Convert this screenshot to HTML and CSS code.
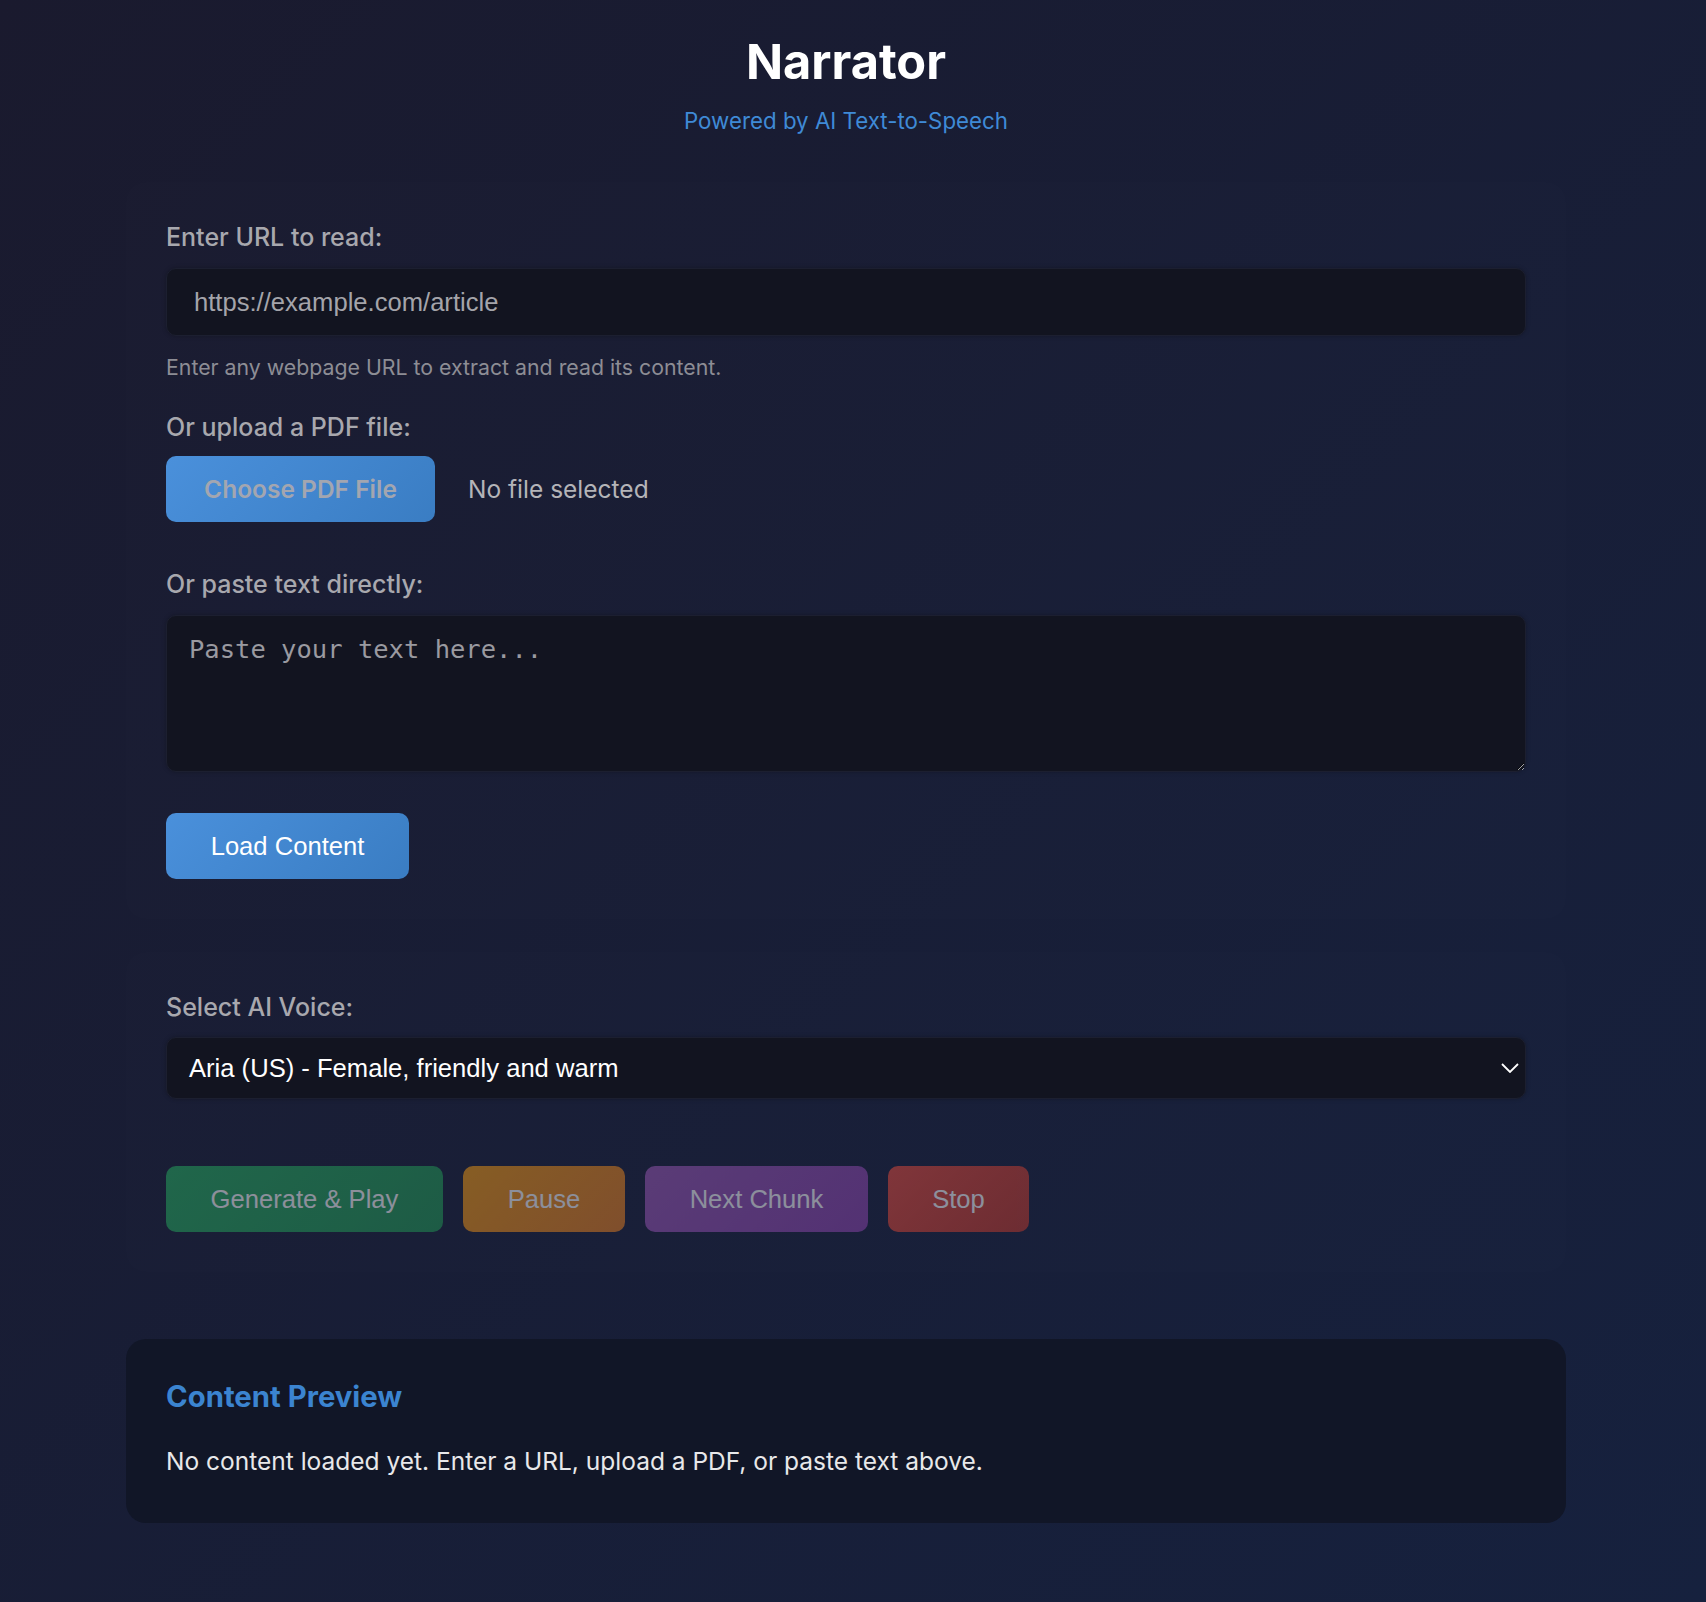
FILE: index.html
```html
<!DOCTYPE html>
<html lang="en">
<head>
<meta charset="utf-8">
<title>Narrator</title>
<link rel="stylesheet" href="styles.css">
</head>
<body>
<div class="page">
  <header class="header">
    <h1 class="title">Narrator</h1>
    <p class="subtitle">Powered by AI Text-to-Speech</p>
  </header>

  <section class="panel panel-input">
    <label class="label label-url" for="url">Enter URL to read:</label>
    <input id="url" class="field field-url" type="text" placeholder="https://example.com/article">
    <p class="helper">Enter any webpage URL to extract and read its content.</p>

    <label class="label label-pdf">Or upload a PDF file:</label>
    <div class="file-row">
      <span class="file-btn">Choose PDF File</span>
      <span class="file-name">No file selected</span>
    </div>

    <label class="label label-text" for="text">Or paste text directly:</label>
    <textarea id="text" class="field field-text" placeholder="Paste your text here..."></textarea>

    <button class="btn btn-load" type="button">Load Content</button>
  </section>

  <section class="panel panel-voice">
    <label class="label label-voice" for="voice">Select AI Voice:</label>
    <div class="select">
      <span class="select-value">Aria (US) - Female, friendly and warm</span>
      <svg class="chevron" width="18" height="10" viewBox="0 0 18 10"><polyline points="1,1 9,9 17,1" fill="none" stroke="#ffffff" stroke-width="1.8"/></svg>
    </div>
    <div class="controls">
      <button class="btn btn-ctrl btn-play" type="button">Generate &amp; Play</button>
      <button class="btn btn-ctrl btn-pause" type="button">Pause</button>
      <button class="btn btn-ctrl btn-next" type="button">Next Chunk</button>
      <button class="btn btn-ctrl btn-stop" type="button">Stop</button>
    </div>
  </section>

  <section class="preview">
    <h2 class="preview-title">Content Preview</h2>
    <p class="preview-text">No content loaded yet. Enter a URL, upload a PDF, or paste text above.</p>
  </section>
</div>
</body>
</html>
```

FILE: styles.css
```css
* { box-sizing: border-box; }

html, body {
  margin: 0;
  padding: 0;
}

body {
  min-height: 1602px;
  background: linear-gradient(135deg, #1a1a2e 0%, #16213e 100%);
  font-family: Inter, "Noto Sans", sans-serif;
  color: #e6e6e6;
  padding-right: 14px;
}

.page {
  max-width: 1440px;
  margin: 0 auto;
  padding-top: 28px;
}

.header {
  text-align: center;
}

.title {
  margin: 0;
  font-size: 48.7px;
  line-height: 68px;
  font-weight: 700;
  color: #ffffff;
}

.subtitle {
  margin: 0;
  margin-top: 10px;
  font-size: 22.3px;
  line-height: 30px;
  color: #3f8ad6;
}

.panel {
  border-radius: 20px;
  background: rgba(255, 255, 255, 0.008);
  padding: 40px;
}

.panel-input {
  margin-top: 46px;
}

.label {
  display: block;
  font-size: 25px;
  line-height: 31px;
  font-weight: 500;
  color: #a8a8ae;
}

.field {
  display: block;
  width: 100%;
  background: #121420;
  border: 1px solid #1c1f30;
  border-radius: 10px;
  box-shadow: 0 0 4px rgba(0, 0, 0, 0.25);
  outline: none;
}

.label-url { margin-bottom: 15px; }

.field-url {
  height: 68px;
  padding: 0 27px;
  font-family: "Liberation Sans", Arial, sans-serif;
  font-size: 25.6px;
  color: #a8a8ae;
}

.field-url::placeholder { color: #a4a4aa; }

.helper {
  margin: 17px 0 0;
  font-size: 21.3px;
  line-height: 28px;
  color: #8d8d95;
}

.label-pdf {
  margin-top: 31px;
  margin-bottom: 13px;
}

.file-row {
  display: flex;
  align-items: center;
  gap: 33px;
}

.file-btn {
  display: flex;
  align-items: center;
  justify-content: center;
  width: 269px;
  height: 66px;
  border-radius: 10px;
  background: linear-gradient(135deg, #4a90db 0%, #3a7dc3 100%);
  font-size: 24.5px;
  font-weight: 600;
  color: #a3a6b0;
}

.file-name {
  font-size: 24.5px;
  color: #b4b4b8;
}

.label-text {
  margin-top: 47px;
  margin-bottom: 15px;
}

.field-text {
  height: 157px;
  padding: 17px 22px;
  resize: vertical;
  font-family: "DejaVu Sans Mono", "Liberation Mono", monospace;
  font-size: 25.5px;
  line-height: 32px;
  color: #a4a4aa;
}

.field-text::placeholder { color: #9a9aa0; }

.btn {
  border: none;
  font-family: "Liberation Sans", Arial, sans-serif;
  font-size: 25.6px;
  color: #ffffff;
  border-radius: 10px;
  height: 66px;
  padding: 0;
  cursor: pointer;
}

.btn-load {
  display: block;
  margin-top: 41px;
  width: 243px;
  background: linear-gradient(135deg, #4a90db 0%, #3a7dc3 100%);
}

.panel-voice {
  margin-top: 33px;
}

.label-voice { margin-bottom: 14px; }

.select {
  display: flex;
  align-items: center;
  justify-content: space-between;
  height: 62px;
  padding: 0 6px 0 22px;
  background: #121420;
  border: 1px solid #1c1f30;
  border-radius: 10px;
  box-shadow: 0 0 4px rgba(0, 0, 0, 0.25);
}

.select-value {
  font-family: "Liberation Sans", Arial, sans-serif;
  font-size: 25.6px;
  color: #ffffff;
}

.controls {
  display: flex;
  gap: 20px;
  margin-top: 67px;
}

.btn-ctrl {
  opacity: 0.5;
}

.btn-play { width: 277px; background: linear-gradient(135deg, #27ae60, #229954); }
.btn-pause { width: 162px; background: linear-gradient(135deg, #f39c12, #e67e22); }
.btn-next { width: 223px; background: linear-gradient(135deg, #9b59b6, #8e44ad); }
.btn-stop { width: 141px; background: linear-gradient(135deg, #e74c3c, #c0392b); }

.preview {
  margin-top: 67px;
  border-radius: 20px;
  background: #111627;
  padding: 38px 40px 46px;
}

.preview-title {
  margin: 0;
  font-size: 29.3px;
  line-height: 40px;
  font-weight: 700;
  color: #3b84d0;
}

.preview-text {
  margin: 28px 0 0;
  font-size: 24.5px;
  line-height: 32px;
  color: #e8e8ea;
}
```
